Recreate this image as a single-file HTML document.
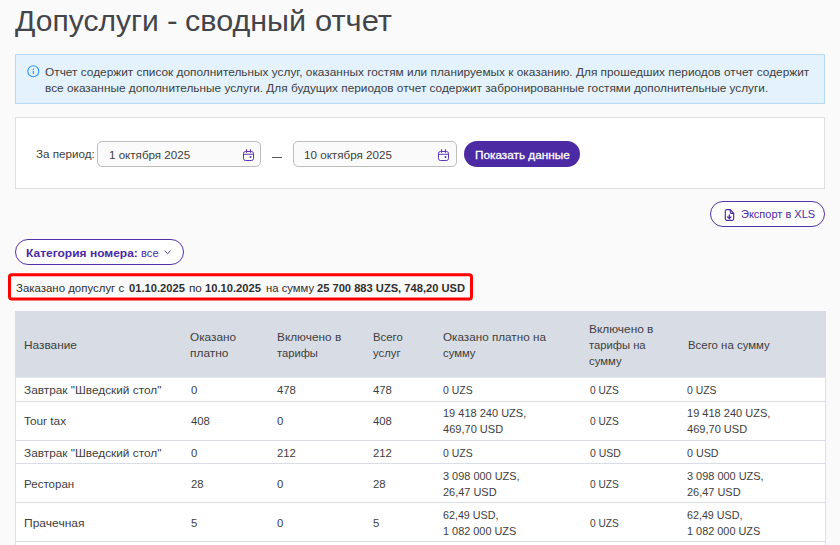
<!DOCTYPE html>
<html><head><meta charset="utf-8">
<style>
*{box-sizing:border-box;margin:0;padding:0}
html,body{width:840px;height:545px;overflow:hidden;background:#fafafa;font-family:"Liberation Sans",sans-serif;}
body{position:relative}
.a{position:absolute}
.t{position:absolute;white-space:pre;transform-origin:0 0;line-height:normal;font-family:"Liberation Sans",sans-serif}
.info{left:15px;top:54px;width:810px;height:50px;background:#e3f2fd;border:1px solid #b7daf6}
.filter{left:15px;top:117px;width:810px;height:72px;background:#fff;border:1px solid #dfdfdf}
.inp{top:141px;height:26px;width:164px;border:1px solid #bebebe;border-radius:5px;background:#fafafa}
.btn{left:464px;top:141px;width:116px;height:26px;border-radius:13px;background:#4b2aa3}
.pill{height:26px;border-radius:13px;border:1px solid #5232aa;background:#fff}
.tbl{left:15px;top:311px;width:811px;height:234px;background:#fff;border-left:1px solid #dbdfe7;border-right:1px solid #dbdfe7}
.th{left:15px;top:311px;width:811px;height:67px;background:linear-gradient(#d8dce5 0,#d8dce5 66px,#e4e7ee 66px,#e4e7ee 67px)}
.ln{left:15px;width:811px;height:1px;background:#d9dde8}
</style></head><body>
<div class="a info"></div>
<svg class="a" style="left:26px;top:64px" width="15" height="15" viewBox="0 0 15 15"><circle cx="7.3" cy="7.25" r="5.5" fill="none" stroke="#2d9cf4" stroke-width="1.15"/><rect x="6.8" y="6.8" width="1.1" height="3.2" fill="#2196f3"/><circle cx="7.35" cy="5.3" r="0.7" fill="#2196f3"/></svg>
<div class="a filter"></div>
<div class="a inp" style="left:97px"></div>
<div class="a inp" style="left:293px"></div>
<svg class="a" style="left:243px;top:149px" width="11" height="12" viewBox="0 0 11 12" fill="none" stroke="#5a34b4" stroke-width="1"><rect x="0.5" y="2.5" width="10" height="9" rx="2" fill="#fff"/><path d="M0.5 5.3H10.5M3.5 0.3V3.7M7.5 0.3V3.7" stroke-width="1.1"/><circle cx="7.5" cy="8" r="1" fill="#5a34b4" stroke="none"/></svg>
<svg class="a" style="left:438px;top:149px" width="11" height="12" viewBox="0 0 11 12" fill="none" stroke="#5a34b4" stroke-width="1"><rect x="0.5" y="2.5" width="10" height="9" rx="2" fill="#fff"/><path d="M0.5 5.3H10.5M3.5 0.3V3.7M7.5 0.3V3.7" stroke-width="1.1"/><circle cx="7.5" cy="8" r="1" fill="#5a34b4" stroke="none"/></svg>
<div class="a" style="left:272px;top:157px;width:10px;height:1px;background:#555"></div>
<div class="a btn"></div>
<div class="a pill" style="left:710px;top:201px;width:115px"></div>
<svg class="a" style="left:724px;top:209px" width="11" height="12" viewBox="0 0 11 12" fill="none" stroke="#4b2aa3" stroke-width="1.15" stroke-linejoin="round" stroke-linecap="round"><path d="M6.3 0.6H2.9A1.6 1.6 0 0 0 1.3 2.2V9.8A1.6 1.6 0 0 0 2.9 11.4H8.1A1.6 1.6 0 0 0 9.7 9.8V4.3Z" fill="#fff"/><path d="M6.3 0.6V3.5a0.8 0.8 0 0 0 .8 .8H9.7"/><path d="M5.3 6V9.4M3.6 7.9L5.3 9.6L7 7.9" stroke-width="1.3"/></svg>
<div class="a pill" style="left:15px;top:239px;width:169px"></div>
<svg class="a" style="left:163px;top:248.7px" width="9" height="7" viewBox="0 0 9 7" fill="none" stroke="#4b2aa3" stroke-width="1"><path d="M1.7 1.8L4.6 4.7L7.5 1.8"/></svg>
<svg class="a" style="left:0;top:265px" width="480" height="44" viewBox="0 265 480 44"><rect x="9.5" y="274.8" width="462" height="24.2" rx="2.2" fill="#fafafa" stroke="#ff0000" stroke-width="3"/></svg>
<div class="a tbl"></div>
<div class="a th"></div>
<div class="a ln" style="top:401px"></div>
<div class="a ln" style="top:440px"></div>
<div class="a ln" style="top:463px"></div>
<div class="a ln" style="top:502px"></div>
<div class="a ln" style="top:541px"></div>
<span class="t" style="left:15.40px;top:5.00px;font-size:29px;font-weight:400;color:#43454a;transform:scaleX(1.0366)">Допуслуги</span>
<span class="t" style="left:167.00px;top:5.00px;font-size:29px;font-weight:400;color:#43454a;transform:scaleX(1.1000)">-</span>
<span class="t" style="left:184.95px;top:5.00px;font-size:29px;font-weight:400;color:#43454a;transform:scaleX(1.0527)">сводный</span>
<span class="t" style="left:315.14px;top:5.00px;font-size:29px;font-weight:400;color:#43454a;transform:scaleX(1.0641)">отчет</span>
<span class="t" style="left:45.20px;top:66.00px;font-size:11.5px;font-weight:400;color:#3e3e3e;transform:scaleX(1.0306)">Отчет содержит список дополнительных услуг, оказанных гостям или планируемых к оказанию. Для прошедших периодов отчет содержит</span>
<span class="t" style="left:45.30px;top:82.00px;font-size:11.5px;font-weight:400;color:#3e3e3e;transform:scaleX(1.0279)">все оказанные дополнительные услуги. Для будущих периодов отчет содержит забронированные гостями дополнительные услуги.</span>
<span class="t" style="left:35.70px;top:148.00px;font-size:11.5px;font-weight:400;color:#3e3e3e;transform:scaleX(1.0133)">За период:</span>
<span class="t" style="left:108.80px;top:149.00px;font-size:11.5px;font-weight:400;color:#3e3e3e;transform:scaleX(1.0074)">1 октября 2025</span>
<span class="t" style="left:303.80px;top:149.00px;font-size:11.5px;font-weight:400;color:#3e3e3e;transform:scaleX(1.0116)">10 октября 2025</span>
<span class="t" style="left:474.50px;top:149.00px;font-size:11.5px;font-weight:400;color:#ffffff;-webkit-text-stroke:0.3px #fff;transform:scaleX(1.0233)">Показать данные</span>
<span class="t" style="left:740.50px;top:208.00px;font-size:11.5px;font-weight:400;color:#4b2aa3;transform:scaleX(0.9579)">Экспорт в XLS</span>
<span class="t" style="left:26.30px;top:247.00px;font-size:11.5px;font-weight:700;color:#4b2aa3;transform:scaleX(1.0434)">Категория номера:</span>
<span class="t" style="left:140.80px;top:247.00px;font-size:11.5px;font-weight:400;color:#4b2aa3;transform:scaleX(0.9701)">все</span>
<span class="t" style="left:15.60px;top:282.00px;font-size:11.5px;font-weight:400;color:#303030;transform:scaleX(0.9940)">Заказано допуслуг с</span>
<span class="t" style="left:128.50px;top:282.00px;font-size:11.5px;font-weight:700;color:#303030;transform:scaleX(0.9715)">01.10.2025</span>
<span class="t" style="left:189.00px;top:282.00px;font-size:11.5px;font-weight:400;color:#303030;transform:scaleX(1.0223)">по</span>
<span class="t" style="left:205.40px;top:282.00px;font-size:11.5px;font-weight:700;color:#303030;transform:scaleX(0.9732)">10.10.2025</span>
<span class="t" style="left:265.70px;top:282.00px;font-size:11.5px;font-weight:400;color:#303030;transform:scaleX(0.9806)">на сумму</span>
<span class="t" style="left:317.30px;top:282.00px;font-size:11.5px;font-weight:700;color:#303030;transform:scaleX(0.9686)">25 700 883 UZS, 748,20 USD</span>
<span class="t" style="left:23.50px;top:339.00px;font-size:11.5px;font-weight:400;color:#3e3e3e;transform:scaleX(1.0295)">Название</span>
<span class="t" style="left:190.00px;top:331.00px;font-size:11.5px;font-weight:400;color:#3e3e3e;transform:scaleX(1.0266)">Оказано</span>
<span class="t" style="left:190.20px;top:347.00px;font-size:11.5px;font-weight:400;color:#3e3e3e;transform:scaleX(1.0382)">платно</span>
<span class="t" style="left:276.90px;top:331.00px;font-size:11.5px;font-weight:400;color:#3e3e3e;transform:scaleX(1.0298)">Включено в</span>
<span class="t" style="left:276.70px;top:347.00px;font-size:11.5px;font-weight:400;color:#3e3e3e;transform:scaleX(0.9709)">тарифы</span>
<span class="t" style="left:372.90px;top:331.00px;font-size:11.5px;font-weight:400;color:#3e3e3e;transform:scaleX(0.9880)">Всего</span>
<span class="t" style="left:372.70px;top:347.00px;font-size:11.5px;font-weight:400;color:#3e3e3e;transform:scaleX(0.9809)">услуг</span>
<span class="t" style="left:442.70px;top:331.00px;font-size:11.5px;font-weight:400;color:#3e3e3e;transform:scaleX(1.0172)">Оказано платно на</span>
<span class="t" style="left:442.70px;top:347.00px;font-size:11.5px;font-weight:400;color:#3e3e3e;transform:scaleX(0.9816)">сумму</span>
<span class="t" style="left:589.20px;top:323.00px;font-size:11.5px;font-weight:400;color:#3e3e3e;transform:scaleX(1.0331)">Включено в</span>
<span class="t" style="left:589.00px;top:339.00px;font-size:11.5px;font-weight:400;color:#3e3e3e;transform:scaleX(0.9757)">тарифы на</span>
<span class="t" style="left:589.00px;top:355.00px;font-size:11.5px;font-weight:400;color:#3e3e3e;transform:scaleX(0.9846)">сумму</span>
<span class="t" style="left:687.70px;top:339.00px;font-size:11.5px;font-weight:400;color:#3e3e3e;transform:scaleX(0.9927)">Всего на сумму</span>
<span class="t" style="left:24.40px;top:384.00px;font-size:11.5px;font-weight:400;color:#3e3e3e;transform:scaleX(1.0284)">Завтрак &quot;Шведский стол&quot;</span>
<span class="t" style="left:190.60px;top:384.00px;font-size:11.5px;font-weight:400;color:#3e3e3e;transform:scaleX(0.9850)">0</span>
<span class="t" style="left:277.30px;top:384.00px;font-size:11.5px;font-weight:400;color:#3e3e3e;transform:scaleX(0.9850)">478</span>
<span class="t" style="left:372.50px;top:384.00px;font-size:11.5px;font-weight:400;color:#3e3e3e;transform:scaleX(0.9850)">478</span>
<span class="t" style="left:442.80px;top:384.00px;font-size:11.5px;font-weight:400;color:#3e3e3e;transform:scaleX(0.9083)">0 UZS</span>
<span class="t" style="left:589.70px;top:384.00px;font-size:11.5px;font-weight:400;color:#3e3e3e;transform:scaleX(0.8840)">0 UZS</span>
<span class="t" style="left:686.90px;top:384.00px;font-size:11.5px;font-weight:400;color:#3e3e3e;transform:scaleX(0.9052)">0 UZS</span>
<span class="t" style="left:24.40px;top:415.00px;font-size:11.5px;font-weight:400;color:#3e3e3e;transform:scaleX(1.0278)">Tour tax</span>
<span class="t" style="left:190.60px;top:415.00px;font-size:11.5px;font-weight:400;color:#3e3e3e;transform:scaleX(0.9850)">408</span>
<span class="t" style="left:277.30px;top:415.00px;font-size:11.5px;font-weight:400;color:#3e3e3e;transform:scaleX(0.9850)">0</span>
<span class="t" style="left:372.50px;top:415.00px;font-size:11.5px;font-weight:400;color:#3e3e3e;transform:scaleX(0.9850)">408</span>
<span class="t" style="left:589.70px;top:415.00px;font-size:11.5px;font-weight:400;color:#3e3e3e;transform:scaleX(0.8840)">0 UZS</span>
<span class="t" style="left:442.80px;top:407.00px;font-size:11.5px;font-weight:400;color:#3e3e3e;transform:scaleX(0.9568)">19 418 240 UZS,</span>
<span class="t" style="left:686.90px;top:407.00px;font-size:11.5px;font-weight:400;color:#3e3e3e;transform:scaleX(0.9579)">19 418 240 UZS,</span>
<span class="t" style="left:442.80px;top:423.00px;font-size:11.5px;font-weight:400;color:#3e3e3e;transform:scaleX(0.9608)">469,70 USD</span>
<span class="t" style="left:686.90px;top:423.00px;font-size:11.5px;font-weight:400;color:#3e3e3e;transform:scaleX(0.9608)">469,70 USD</span>
<span class="t" style="left:24.40px;top:447.00px;font-size:11.5px;font-weight:400;color:#3e3e3e;transform:scaleX(1.0284)">Завтрак &quot;Шведский стол&quot;</span>
<span class="t" style="left:190.60px;top:447.00px;font-size:11.5px;font-weight:400;color:#3e3e3e;transform:scaleX(0.9850)">0</span>
<span class="t" style="left:277.30px;top:447.00px;font-size:11.5px;font-weight:400;color:#3e3e3e;transform:scaleX(0.9850)">212</span>
<span class="t" style="left:372.50px;top:447.00px;font-size:11.5px;font-weight:400;color:#3e3e3e;transform:scaleX(0.9850)">212</span>
<span class="t" style="left:442.80px;top:447.00px;font-size:11.5px;font-weight:400;color:#3e3e3e;transform:scaleX(0.9083)">0 UZS</span>
<span class="t" style="left:589.70px;top:447.00px;font-size:11.5px;font-weight:400;color:#3e3e3e;transform:scaleX(0.9116)">0 USD</span>
<span class="t" style="left:686.90px;top:447.00px;font-size:11.5px;font-weight:400;color:#3e3e3e;transform:scaleX(0.9325)">0 USD</span>
<span class="t" style="left:24.40px;top:478.00px;font-size:11.5px;font-weight:400;color:#3e3e3e;transform:scaleX(1.0053)">Ресторан</span>
<span class="t" style="left:190.60px;top:478.00px;font-size:11.5px;font-weight:400;color:#3e3e3e;transform:scaleX(0.9850)">28</span>
<span class="t" style="left:277.30px;top:478.00px;font-size:11.5px;font-weight:400;color:#3e3e3e;transform:scaleX(0.9850)">0</span>
<span class="t" style="left:372.50px;top:478.00px;font-size:11.5px;font-weight:400;color:#3e3e3e;transform:scaleX(0.9850)">28</span>
<span class="t" style="left:589.70px;top:478.00px;font-size:11.5px;font-weight:400;color:#3e3e3e;transform:scaleX(0.8840)">0 UZS</span>
<span class="t" style="left:442.80px;top:470.00px;font-size:11.5px;font-weight:400;color:#3e3e3e;transform:scaleX(0.9508)">3 098 000 UZS,</span>
<span class="t" style="left:686.90px;top:470.00px;font-size:11.5px;font-weight:400;color:#3e3e3e;transform:scaleX(0.9508)">3 098 000 UZS,</span>
<span class="t" style="left:442.80px;top:486.00px;font-size:11.5px;font-weight:400;color:#3e3e3e;transform:scaleX(0.9527)">26,47 USD</span>
<span class="t" style="left:686.90px;top:486.00px;font-size:11.5px;font-weight:400;color:#3e3e3e;transform:scaleX(0.9527)">26,47 USD</span>
<span class="t" style="left:24.40px;top:517.00px;font-size:11.5px;font-weight:400;color:#3e3e3e;transform:scaleX(1.0478)">Прачечная</span>
<span class="t" style="left:190.60px;top:517.00px;font-size:11.5px;font-weight:400;color:#3e3e3e;transform:scaleX(0.9850)">5</span>
<span class="t" style="left:277.30px;top:517.00px;font-size:11.5px;font-weight:400;color:#3e3e3e;transform:scaleX(0.9850)">0</span>
<span class="t" style="left:372.50px;top:517.00px;font-size:11.5px;font-weight:400;color:#3e3e3e;transform:scaleX(0.9850)">5</span>
<span class="t" style="left:589.70px;top:517.00px;font-size:11.5px;font-weight:400;color:#3e3e3e;transform:scaleX(0.8840)">0 UZS</span>
<span class="t" style="left:442.80px;top:509.00px;font-size:11.5px;font-weight:400;color:#3e3e3e;transform:scaleX(0.9316)">62,49 USD,</span>
<span class="t" style="left:686.90px;top:509.00px;font-size:11.5px;font-weight:400;color:#3e3e3e;transform:scaleX(0.9316)">62,49 USD,</span>
<span class="t" style="left:442.80px;top:525.00px;font-size:11.5px;font-weight:400;color:#3e3e3e;transform:scaleX(0.9474)">1 082 000 UZS</span>
<span class="t" style="left:686.90px;top:525.00px;font-size:11.5px;font-weight:400;color:#3e3e3e;transform:scaleX(0.9474)">1 082 000 UZS</span>
</body></html>
